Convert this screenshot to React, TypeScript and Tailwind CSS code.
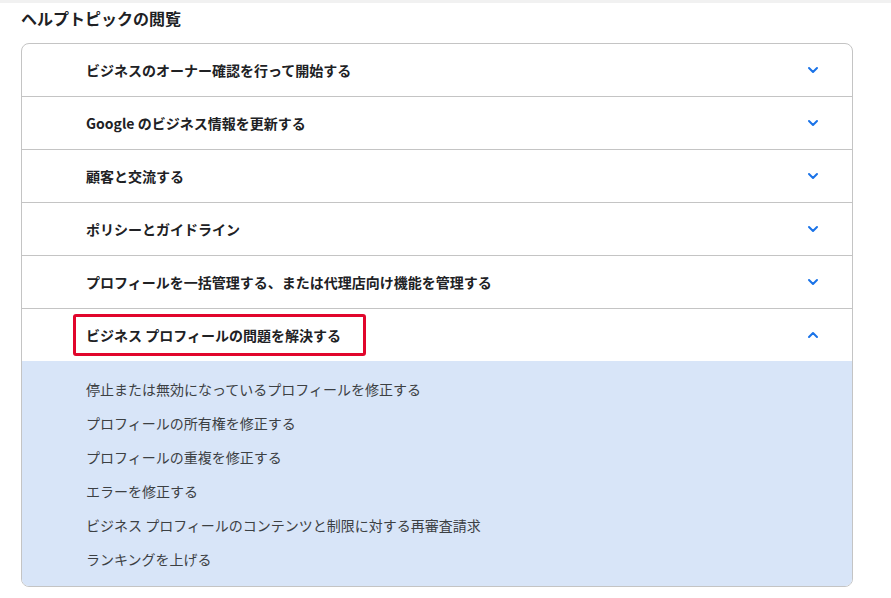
import { ChevronDown, ChevronUp } from "lucide-react";

const topics = [
  "ビジネスのオーナー確認を行って開始する",
  "Google のビジネス情報を更新する",
  "顧客と交流する",
  "ポリシーとガイドライン",
  "プロフィールを一括管理する、または代理店向け機能を管理する",
];

const subTopics = [
  "停止または無効になっているプロフィールを修正する",
  "プロフィールの所有権を修正する",
  "プロフィールの重複を修正する",
  "エラーを修正する",
  "ビジネス プロフィールのコンテンツと制限に対する再審査請求",
  "ランキングを上げる",
];

export default function App() {
  return (
    <div
      className="w-[891px] h-[598px] bg-white overflow-hidden"
      style={{ fontFamily: '"Noto Sans CJK JP", "Noto Sans", sans-serif' }}
    >
      <div className="h-[3px] bg-[#f1f1f1]" />
      <div className="pl-[21px] pr-[38px]">
        <h2 className="h-[40px] pt-[3px] text-[16px] font-semibold text-[#202124] leading-[24px]">
          ヘルプトピックの閲覧
        </h2>

        <div className="border border-[#c4c4c4] rounded-[8px] overflow-hidden">
          {topics.map((t) => (
            <div
              key={t}
              className="h-[53px] border-b border-[#c4c4c4] flex items-center justify-between pl-[64px] pr-[31px]"
            >
              <span className="text-[14px] font-bold text-[#202124]">{t}</span>
              <ChevronDown className="w-[16px] h-[16px] text-[#1a73e8]" strokeWidth={3} />
            </div>
          ))}

          {/* open section */}
          <div className="h-[52px] flex items-center justify-between pl-[51px] pr-[31px]">
            <span className="border-[3px] border-[#e1062c] rounded-[3px] pl-[10px] pr-[22px] pt-[8px] pb-[7px] text-[14px] font-bold text-[#202124] leading-[21px]">
              ビジネス プロフィールの問題を解決する
            </span>
            <ChevronUp className="w-[16px] h-[16px] text-[#1a73e8]" strokeWidth={3} />
          </div>
          <div className="bg-[#d8e5f8] pl-[64px] pt-[11px] pb-[10px]">
            {subTopics.map((s) => (
              <div key={s} className="h-[34px] flex items-center text-[14px] text-[#3c4043]">
                {s}
              </div>
            ))}
          </div>
        </div>
      </div>
    </div>
  );
}
